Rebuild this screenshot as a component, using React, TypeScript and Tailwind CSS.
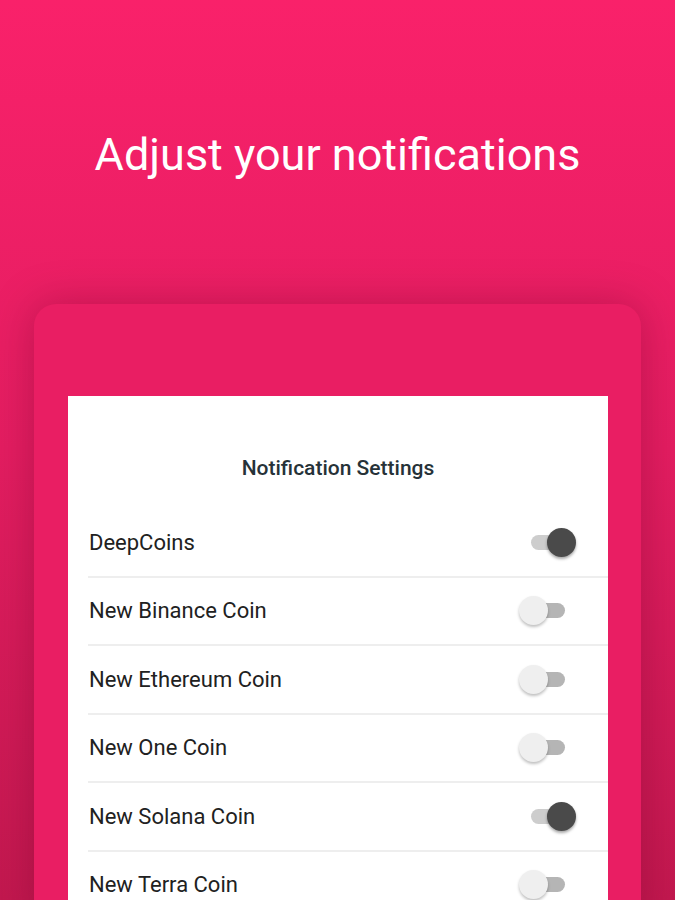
const settings = [
  { label: "DeepCoins", on: true },
  { label: "New Binance Coin", on: false },
  { label: "New Ethereum Coin", on: false },
  { label: "New One Coin", on: false },
  { label: "New Solana Coin", on: true },
  { label: "New Terra Coin", on: false },
];

function Toggle({ on }: { on: boolean }) {
  return (
    <div
      className={`relative w-[34px] h-[15px] rounded-full ${
        on ? "bg-[#cdcdcd]" : "bg-[#b5b5b5]"
      }`}
    >
      {on ? (
        <div className="absolute left-[16px] top-[-7px] w-[29px] h-[29px] rounded-full bg-[#4a4a4a] shadow-[0_2px_3px_rgba(0,0,0,0.35)]" />
      ) : (
        <div className="absolute left-[-12px] top-[-7px] w-[29px] h-[29px] rounded-full bg-[#efefef] shadow-[0_2px_3px_rgba(0,0,0,0.25)]" />
      )}
    </div>
  );
}

export default function App() {
  return (
    <div
      className="w-[675px] h-[900px] overflow-hidden bg-gradient-to-b from-[#f9216a] via-[#e31d61] to-[#c2184f]"
      style={{ fontFamily: "Roboto, 'Noto Sans', sans-serif" }}
    >
      <div className="h-[304px] pt-[126px]">
        <h1 className="text-center text-white text-[45px] leading-[58px]">
          Adjust your notifications
        </h1>
      </div>

      <div className="mx-[34px] h-[620px] rounded-t-[22px] bg-[#e91e63] pl-[34px] pr-[33px] pt-[92px] shadow-[0_0_40px_rgba(110,0,40,0.35)]">
        <div className="bg-white h-full pt-[59px] pl-[20px]">
          <h2 className="text-center -ml-[20px] text-[21px] leading-[26px] font-medium text-[#263238]">
            Notification Settings
          </h2>
          <div className="mt-[28px]">
            {settings.map((s) => (
              <div
                key={s.label}
                className="h-[68.5px] flex items-center justify-between border-b-2 border-[#eeeeee] pl-px pr-[43px]"
              >
                <span className="text-[22px] text-[#212121]">{s.label}</span>
                <Toggle on={s.on} />
              </div>
            ))}
          </div>
        </div>
      </div>
    </div>
  );
}
